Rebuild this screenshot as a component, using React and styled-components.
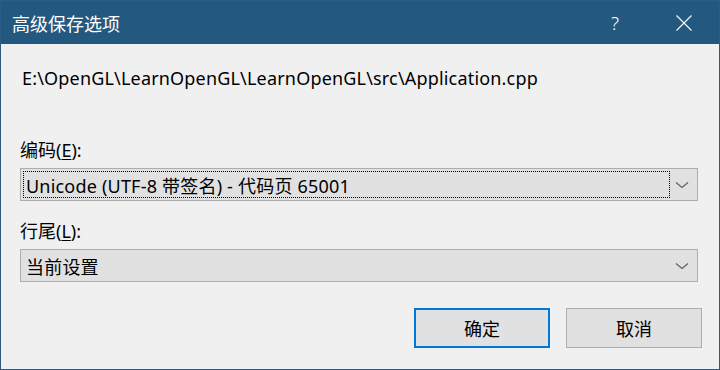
import React from 'react';
import styled, { createGlobalStyle } from 'styled-components';

const GlobalStyle = createGlobalStyle`
  html, body {
    margin: 0;
    padding: 0;
    background: #f0f0f0;
  }
  body {
    font-family: "Noto Sans", "Noto Sans CJK SC", sans-serif;
  }
`;

const Window = styled.div`
  width: 720px;
  height: 370px;
  box-sizing: border-box;
  border: 1px solid #2b5c86;
  background: #f0f0f0;
  display: flex;
  flex-direction: column;
  color: #000;
`;

const TitleBar = styled.div`
  height: 43px;
  background: #23587f;
  display: flex;
  align-items: center;
  padding-left: 11px;
  color: #fff;
  font-size: 18px;
`;

const Title = styled.div`
  flex: 1;
`;

const TitleButton = styled.div`
  width: ${(p) => p.w}px;
  height: 43px;
  display: flex;
  align-items: center;
  justify-content: center;
  color: #fff;
  font-size: 19px;
  font-weight: 300;
`;

const Body = styled.div`
  flex: 1;
  display: flex;
  flex-direction: column;
  padding: 0 17px 0 19px;
  font-size: 18px;
`;

const PathText = styled.div`
  margin: 22px 0 0 2px;
  line-height: 24px;
  white-space: nowrap;
  letter-spacing: 0.18px;
`;

const Label = styled.div`
  margin-top: ${(p) => p.top}px;
  line-height: 24px;
  u {
    text-decoration: underline;
    text-underline-offset: 2px;
  }
`;

const Select = styled.div`
  margin-top: 6px;
  margin-right: 4px;
  height: 33px;
  box-sizing: border-box;
  border: 1px solid #adadad;
  background: #e1e1e1;
  display: flex;
  align-items: center;
  padding: 2px;
`;

const SelectValue = styled.div`
  flex: 1;
  height: 100%;
  box-sizing: border-box;
  display: flex;
  align-items: center;
  padding-left: 2px;
  margin-right: 5px;
  border: 1px dotted ${(p) => (p.focused ? '#000' : 'transparent')};
  white-space: nowrap;
  letter-spacing: 0.2px;
`;

const Chevron = styled.svg`
  width: 14px;
  height: 8px;
  margin-right: 6px;
  flex-shrink: 0;
`;

const ButtonRow = styled.div`
  margin-top: 26px;
  display: flex;
  justify-content: flex-end;
  gap: 16px;
`;

const Button = styled.button`
  width: 136px;
  height: 40px;
  box-sizing: border-box;
  background: #e1e1e1;
  border: ${(p) => (p.primary ? '2px solid #0078d7' : '1px solid #adadad')};
  font-family: inherit;
  font-size: 18px;
  color: #000;
  padding: 0;
`;

const ChevronIcon = () => (
  <Chevron viewBox="0 0 14 8">
    <path d="M1 1.5 L7 6.5 L13 1.5" fill="none" stroke="#606060" strokeWidth="1.2" />
  </Chevron>
);

const App = () => {
  return (
    <>
      <GlobalStyle />
      <Window>
        <TitleBar>
          <Title>高级保存选项</Title>
          <TitleButton w={68}>?</TitleButton>
          <TitleButton w={70}>
            <svg width="16" height="16" viewBox="0 0 16 16">
              <path d="M0.5 0.5 L15.5 15.5 M15.5 0.5 L0.5 15.5" stroke="#fff" strokeWidth="1.1" />
            </svg>
          </TitleButton>
        </TitleBar>
        <Body>
          <PathText>E:\OpenGL\LearnOpenGL\LearnOpenGL\src\Application.cpp</PathText>
          <Label top={48}>编码(<u>E</u>):</Label>
          <Select>
            <SelectValue focused>Unicode (UTF-8 带签名) - 代码页 65001</SelectValue>
            <ChevronIcon />
          </Select>
          <Label top={18}>行尾(<u>L</u>):</Label>
          <Select>
            <SelectValue>当前设置</SelectValue>
            <ChevronIcon />
          </Select>
          <ButtonRow>
            <Button primary>确定</Button>
            <Button>取消</Button>
          </ButtonRow>
        </Body>
      </Window>
    </>
  );
};

export default App;
